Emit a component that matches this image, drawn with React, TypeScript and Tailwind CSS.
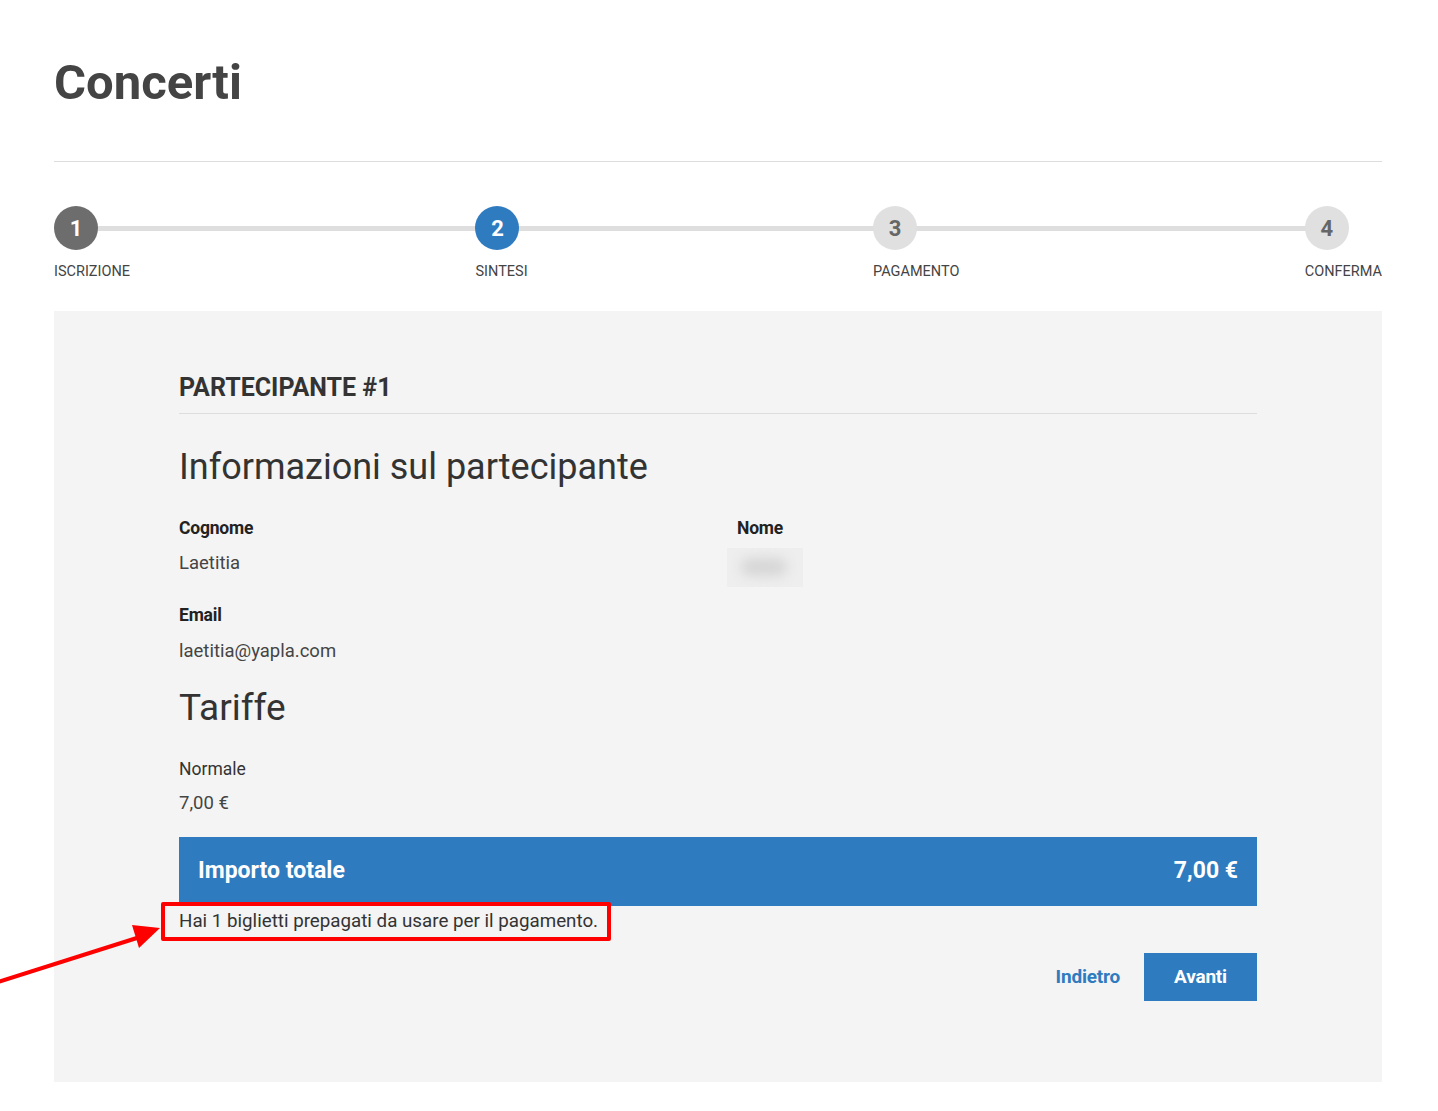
const steps = [
  { n: 1, label: "ISCRIZIONE", circle: "bg-[#6d6d6d] text-white" },
  { n: 2, label: "SINTESI", circle: "bg-[#2e7bbf] text-white" },
  { n: 3, label: "PAGAMENTO", circle: "bg-[#e0e0e0] text-[#666]" },
  { n: 4, label: "CONFERMA", circle: "bg-[#e0e0e0] text-[#666]" },
]

const Stepper = () => (
  <div className="relative mt-[44px] flex justify-between">
    <div className="absolute left-[22px] right-[50px] top-[20px] h-[5px] bg-[#dedede]" />
    {steps.map(({ n, label, circle }) => (
      <div key={n} className="relative flex flex-col items-start">
        <div className={`flex h-[44px] w-[44px] items-center justify-center rounded-full text-[22px] font-bold ${circle}`}>
          {n}
        </div>
        <span className="mt-[15px] text-[14.5px] leading-none text-[#444]">{label}</span>
      </div>
    ))}
  </div>
)

const Field = ({ label, children }: { label: string; children: React.ReactNode }) => (
  <div>
    <div className="text-[17.5px] font-bold leading-none tracking-[-0.2px] text-[#222]">{label}</div>
    <div className="mt-[17px] h-[20px] text-[18.5px] leading-none text-[#444]">{children}</div>
  </div>
)

export default function App() {
  return (
    <div className="relative min-h-[1111px] bg-white font-['Roboto',sans-serif]">
      <div className="ml-[54px] w-[1328px] pb-[29px]">
        <h1 className="pt-[58px] text-[49px] font-bold leading-none text-[#444]">Concerti</h1>
        <div className="mt-[54px] h-px bg-[#dddddd]" />

        <Stepper />

        <div className="mt-[31px] bg-[#f4f4f4] px-[125px] pb-[81px] pt-[64px]">
          <h2 className="text-[25px] font-bold leading-none text-[#333]">PARTECIPANTE #1</h2>
          <div className="mt-[13px] h-px bg-[#dddddd]" />

          <h3 className="mt-[35px] text-[36px] leading-none text-[#333]">Informazioni sul partecipante</h3>

          <div className="mt-[35px] grid grid-cols-2 gap-x-[38px]">
            <Field label="Cognome">Laetitia</Field>
            <Field label="Nome">
              <div className="-ml-[10px] -mt-[6px] h-[39px] w-[76px] overflow-hidden bg-[#eeeeee]">
                <div className="ml-[14px] mt-[10px] h-[18px] w-[46px] rounded-full bg-[#d6d6d6] blur-[6px]" />
              </div>
            </Field>
          </div>

          <div className="mt-[33px]">
            <Field label="Email">laetitia@yapla.com</Field>
          </div>

          <h3 className="mt-[27px] text-[37px] leading-none text-[#333]">Tariffe</h3>

          <div className="mt-[35px] text-[17.5px] leading-none text-[#333]">Normale</div>
          <div className="mt-[16px] text-[18.5px] leading-none text-[#444]">7,00 €</div>

          <div className="mt-[24px] flex h-[69px] items-center justify-between bg-[#2e7bbf] px-[19px] text-[23px] font-bold text-white">
            <span>Importo totale</span>
            <span>7,00 €</span>
          </div>

          <div className="relative">
            <div className="absolute -left-[18px] -top-[4px] h-[39px] w-[450px] rounded-[2px] border-[4px] border-[#ff0000]" />
            <p className="pt-[6px] text-[18.75px] leading-none text-[#333]">
              Hai 1 biglietti prepagati da usare per il pagamento.
            </p>
          </div>

          <div className="mt-[23px] flex items-center justify-end gap-[24px]">
            <button className="text-[19px] font-bold tracking-[-0.2px] text-[#2e7bbf]">Indietro</button>
            <button className="h-[48px] w-[113px] bg-[#2e7bbf] text-[19px] font-bold tracking-[-0.2px] text-white">
              Avanti
            </button>
          </div>
        </div>
      </div>

      <svg className="pointer-events-none absolute left-0 top-[920px]" width="170" height="70" viewBox="0 0 170 70">
        <line x1="-2" y1="62" x2="140" y2="17" stroke="#ff0000" strokeWidth="4" />
        <polygon points="160,8 132,5 139,28" fill="#ff0000" />
      </svg>
    </div>
  )
}
